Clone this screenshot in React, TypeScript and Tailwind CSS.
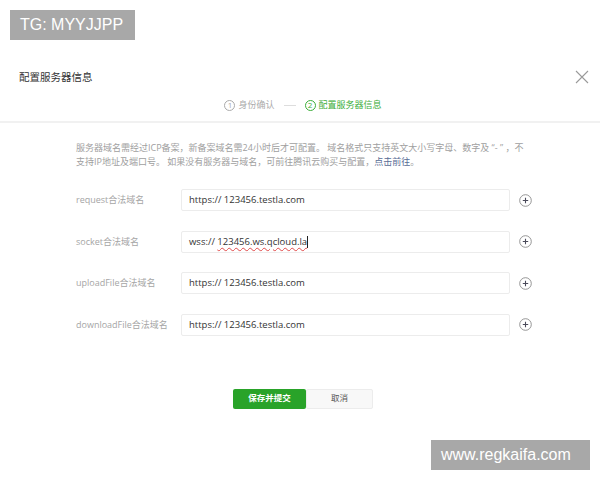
import React from "react";

const font = { fontFamily: '"Open Sans", "Noto Sans CJK SC", sans-serif' };

interface Row {
  label: string;
  value: string;
  prefix?: string;
  flagged?: boolean;
}

const rows: Row[] = [
  { label: "request合法域名", value: "https:// 123456.testla.com" },
  { label: "socket合法域名", prefix: "wss:// ", value: "123456.ws.qcloud.la", flagged: true },
  { label: "uploadFile合法域名", value: "https:// 123456.testla.com" },
  { label: "downloadFile合法域名", value: "https:// 123456.testla.com" },
];

function PlusCircle() {
  return (
    <svg width="13" height="13" viewBox="0 0 13 13" fill="none">
      <circle cx="6.5" cy="6.5" r="5.8" stroke="#8a8a8a" strokeWidth="0.9" />
      <path d="M6.5 3.8v5.4M3.8 6.5h5.4" stroke="#4a4a5a" strokeWidth="1.1" />
    </svg>
  );
}

function StepCircle({ n, color }: { n: number; color: string }) {
  return (
    <span
      className="inline-flex items-center justify-center w-[11px] h-[11px] rounded-full border text-[8px] leading-none"
      style={{ borderColor: color, color }}
    >
      {n}
    </span>
  );
}

export default function App() {
  return (
    <div className="relative w-[600px] h-[480px] bg-white overflow-hidden" style={font}>
      {/* header */}
      <div className="flex items-center justify-between pl-[19px] pr-[11px] pt-[68px]">
        <h1 className="text-[10.5px] leading-[18px] text-[#333]">配置服务器信息</h1>
        <svg width="14" height="14" viewBox="0 0 14 14">
          <path d="M1 1l12 12M13 1L1 13" stroke="#9a9a9a" strokeWidth="1.1" />
        </svg>
      </div>

      {/* steps */}
      <div className="flex items-center justify-center gap-[3px] mt-[13px] pb-[10px] pl-[6px] border-b-2 border-[#f1f1f1] h-[24px] text-[9px] leading-[14px]">
        <span className="flex items-center gap-[3px] text-[#aaa]">
          <StepCircle n={1} color="#aaa" />
          身份确认
        </span>
        <span className="w-[12px] h-px bg-[#ddd] mx-[6px]" />
        <span className="flex items-center gap-[3px] text-[#3cae3a]">
          <StepCircle n={2} color="#3cae3a" />
          配置服务器信息
        </span>
      </div>

      {/* description */}
      <p className="mt-[18px] pl-[76px] text-[9px] leading-[14px] text-[#a0a0a0] whitespace-nowrap">
        服务器域名需经过ICP备案，新备案域名需24小时后才可配置。 域名格式只支持英文大小写字母、数字及 “- ” ，不
        <br />
        支持IP地址及端口号。 如果没有服务器与域名，可前往腾讯云购买与配置，
        <span className="text-[#576b95]">点击前往</span>。
      </p>

      {/* form */}
      <div className="flex flex-col gap-[19.5px] mt-[20px]">
        {rows.map((row) => (
          <div key={row.label} className="flex items-center h-[22px]">
            <label className="w-[181px] pl-[76px] text-[9px] text-[#a5a5a5] whitespace-nowrap">
              {row.label}
            </label>
            <div className="block w-[329px] h-[22px] border border-[#ececec] rounded-[2px] pl-[7px] text-[9.5px] leading-[20px] text-[#333] whitespace-pre">
              {row.prefix}
              {row.flagged ? (
                <span className="underline decoration-wavy decoration-[#e04a4a] underline-offset-2">
                  {row.value}
                </span>
              ) : (
                row.value
              )}
              {row.flagged && <span className="inline-block align-middle w-px h-[12px] bg-[#222]" />}
            </div>
            <span className="ml-[9px] flex">
              <PlusCircle />
            </span>
          </div>
        ))}
      </div>

      {/* actions */}
      <div className="flex justify-center mt-[53px] pl-[6px]">
        <button className="w-[73px] h-[20px] rounded-[2px] bg-[#29a329] text-white text-[8.5px] font-bold">
          保存并提交
        </button>
        <button className="w-[67px] h-[20px] rounded-[2px] bg-[#f8f8f8] border border-[#ececec] text-[#555] text-[8.5px]">
          取消
        </button>
      </div>

      {/* watermarks */}
      <div
        className="absolute left-[10px] top-[10px] w-[125px] h-[30px] bg-[#a8a8a8] text-white text-[16px] flex items-center pl-[10px]"
        style={{ fontFamily: '"Liberation Sans", sans-serif' }}
      >
        TG: MYYJJPP
      </div>
      <div
        className="absolute left-[431px] top-[440px] w-[159px] h-[30px] bg-[#a8a8a8] text-white text-[16px] flex items-center pl-[10px]"
        style={{ fontFamily: '"Liberation Sans", sans-serif' }}
      >
        www.regkaifa.com
      </div>
    </div>
  );
}
